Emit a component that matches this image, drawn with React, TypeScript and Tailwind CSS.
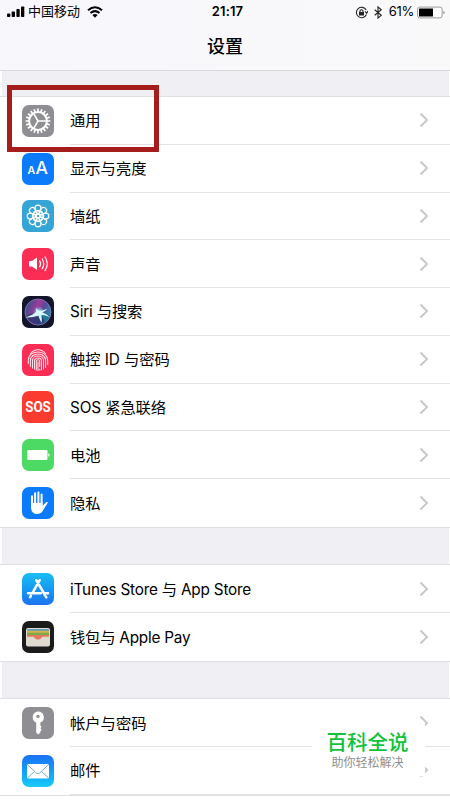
import type { ReactNode } from 'react';

type Item = {
    label: string;
    bg: string;
    icon: ReactNode;
    tracking?: string;
};

const angles = (count: number) => Array.from({ length: count }, (_, i) => (360 / count) * i);

const GearIcon = () => (
    <svg viewBox="0 0 32 32" className="size-8" fill="none" stroke="#fff">
        <circle cx="16" cy="16" r="8.9" strokeWidth="2" />
        {angles(20).map((a) => (
            <path key={a} d="M16 3.6v3.4" strokeWidth="1.7" transform={`rotate(${a} 16 16)`} />
        ))}
        {[90, 210, 330].map((a) => (
            <path key={a} d="M16 8v8" strokeWidth="1.6" transform={`rotate(${a} 16 16)`} />
        ))}
    </svg>
);

const DisplayIcon = () => (
    <svg viewBox="0 0 32 32" className="size-8" fill="#fff" fontFamily="Inter, sans-serif">
        <text x="5.5" y="21.2" fontSize="10.5" fontWeight="600">A</text>
        <text x="13.4" y="21.2" fontSize="17.5" fontWeight="500">A</text>
    </svg>
);

const WallpaperIcon = () => (
    <svg viewBox="0 0 32 32" className="size-8" fill="none" stroke="#fff" strokeWidth="1.25">
        <circle cx="16" cy="16" r="1.8" />
        {angles(8).map((a) => (
            <g key={a} transform={`rotate(${a} 16 16)`}>
                <circle cx="16" cy="8.2" r="3" />
                <ellipse cx="16" cy="12.3" rx="1.6" ry="2" />
            </g>
        ))}
    </svg>
);

const SoundIcon = () => (
    <svg viewBox="0 0 32 32" className="size-8" fill="none" stroke="#fff" strokeWidth="1.2" strokeLinecap="round">
        <path d="M7 13h3l5-3.5v12.4L10 18.500H7z" fill="#fff" stroke="none" />
        <path d="M17.6 12.8q2 3 0 6M20.2 11q3.2 4.8 0 9.7M23 9q4.6 6.8 0 13.6" />
    </svg>
);

const SiriIcon = () => (
    <svg viewBox="0 0 32 32" className="size-8">
        <defs>
            <linearGradient id="siri" x1="0" y1="0.3" x2="1" y2="0.7">
                <stop offset="0" stopColor="#2c4f8e" />
                <stop offset="0.4" stopColor="#a03c9c" />
                <stop offset="0.65" stopColor="#5a479b" />
                <stop offset="1" stopColor="#1f9db5" />
            </linearGradient>
            <radialGradient id="siriGlow">
                <stop offset="0" stopColor="#fff" />
                <stop offset="0.35" stopColor="#9be9f5" stopOpacity="0.7" />
                <stop offset="1" stopColor="#5bc5e8" stopOpacity="0" />
            </radialGradient>
        </defs>
        <circle cx="16" cy="16" r="13" fill="url(#siri)" />
        <path d="M4 20q6-3 12-4 6 0 12 4-3 9-12 9.5Q7 28 4 20z" fill="#24356f" opacity="0.8" />
        <path d="M18 17q5 0 10 3-2 4-5 6z" fill="#1c8f9f" opacity="0.7" />
        <circle cx="16" cy="16" r="13" fill="none" stroke="#8f7db5" strokeWidth="0.8" />
        <circle cx="17" cy="16" r="6" fill="url(#siriGlow)" />
        <path d="M3.500 21.500q6-1.500 10.500-5.500 1-1.500-.5-4 2.300 1.500 3.500 3 4-.2 8.500-2.200-2.800 3-5.300 3.600 4.500 1 7.800 4.800-4.500-2.300-8.700-2.500 1 4 .2 8.300-2.200-3.600-3-7.500-5.500 2.300-13 2z" fill="#d5fbfb" />
    </svg>
);

const TouchIdIcon = () => (
    <svg viewBox="0 0 32 32" className="size-8" fill="none" stroke="#ffe3ea" strokeWidth="1.05" strokeLinecap="round">
        <path d="M8.5 9.5Q11.5 5.7 16 5.7t7.5 3.8" />
        <path d="M6.3 19.500v-3C6.3 11 10.500 7.9 16 7.900s9.700 3.500 9.700 8.600v4" />
        <path d="M8.400 22.500v-6c0-4 3.500-6.500 7.600-6.500s7.600 2.500 7.600 6.500v7" />
        <path d="M10.500 24v-7.500c0-2.900 2.600-4.500 5.500-4.500s5.500 1.700 5.500 4.500v8.500" />
        <path d="M12.500 25.200v-8.500c0-1.700 1.700-2.700 3.500-2.700s3.500 1 3.500 2.700v9" />
        <path d="M14.300 26v-8.700q0-1.500 1.700-1.500t1.700 1.500v5.200M16 18v8.500M17.800 25v1.200" />
    </svg>
);

const SosIcon = () => (
    <svg viewBox="0 0 32 32" className="size-8">
        <text x="16" y="21.3" fontSize="15.5" fontWeight="700" textAnchor="middle" textLength="25.5" lengthAdjust="spacingAndGlyphs" fill="#fff" fontFamily="Roboto, sans-serif">SOS</text>
    </svg>
);

const BatteryIcon = () => (
    <svg viewBox="0 0 32 32" className="size-8" fill="#fff">
        <rect x="5.3" y="11" width="20.2" height="10" rx="1.3" />
        <path d="M26.3 14.200q1.300.3 1.300 1.800t-1.300 1.800z" />
    </svg>
);

const HandIcon = () => (
    <svg viewBox="0 0 32 32" className="size-8" fill="none" stroke="#fff" strokeLinecap="round">
        <path d="M10 9.200v9M13.100 6.300V17M16.400 5.600V17M19.600 7.500v11" strokeWidth="2" />
        <path d="M9 15.500q6.200 1.200 11.600 0v3.600l3.400-3.800q1.400-.9 2 .2l-4.200 6.600q-1.800 4.900-6.300 4.900Q9 27 9 20z" fill="#fff" stroke="none" />
    </svg>
);

const AppStoreIcon = () => (
    <svg viewBox="0 0 32 32" className="size-8" fill="none" stroke="#fff" strokeWidth="2.5" strokeLinecap="round">
        <path d="M17.700 7.200L10.500 19.800M14.300 7.200L22.900 22M6 20.200h12.800M23 20.200h3M8.900 22.800L8 24.300M23.500 23l.8 1.400" />
    </svg>
);

const WalletIcon = () => (
    <svg viewBox="0 0 32 32" className="size-8">
        <rect x="4" y="7" width="24" height="18.5" rx="2" fill="#dedacf" />
        <path d="M5 10V9.300Q5 8 6.300 8h19.400Q27 8 27 9.300v.7z" fill="#5b9fc0" />
        <path d="M5 9.700h22v2.300H5z" fill="#d9b044" />
        <path d="M5 11.700h22v2.600H5z" fill="#7aab4a" />
        <path d="M5 14h22v5H5z" fill="#e4785b" />
        <path d="M5 15.700h6q1 0 1.700 1.200 1.100 1.600 3.300 1.600t3.300-1.600q.7-1.200 1.700-1.200h6v7q0 1.500-1.500 1.500h-19Q5 24.200 5 22.700z" fill="#dedacf" />
    </svg>
);

const KeyIcon = () => (
    <svg viewBox="0 0 32 32" className="size-8">
        <path fillRule="evenodd" fill="#fff" d="M16 4.500a5.800 5.800 0 0 1 2.400 11.100v3l1.200 1.200-1.200 1.500 1.300 1.400-1.300 1.500v1.300L16.200 27.500l-2-2V15.600A5.800 5.800 0 0 1 16 4.500zm0 3.200a1.700 1.700 0 1 0 0 3.400 1.700 1.700 0 0 0 0-3.400z" />
    </svg>
);

const MailIcon = () => (
    <svg viewBox="0 0 32 32" className="size-8">
        <rect x="5" y="9" width="22" height="14.5" rx="1.5" fill="#fff" />
        <path d="M5.500 9.700l9 8.500q1.500 1.200 3 0l9-8.500M5.600 22.800l7-6.400M26.400 22.800l-7-6.400" fill="none" stroke="#6d9fc2" strokeWidth="0.9" />
    </svg>
);

const groups: Item[][] = [
    [
        { label: '通用', bg: 'bg-[#8e8e93]', icon: <GearIcon /> },
        { label: '显示与亮度', bg: 'bg-[#0b7bfb]', icon: <DisplayIcon /> },
        { label: '墙纸', bg: 'bg-[#35a5d6]', icon: <WallpaperIcon /> },
        { label: '声音', bg: 'bg-[#fb2d55]', icon: <SoundIcon /> },
        { label: 'Siri 与搜索', bg: 'bg-[#11142b]', icon: <SiriIcon />, tracking: 'tracking-[-0.15px]' },
        { label: '触控 ID 与密码', bg: 'bg-[#fb2d55]', icon: <TouchIdIcon />, tracking: 'tracking-[-0.05px]' },
        { label: 'SOS 紧急联络', bg: 'bg-[#fb3b30]', icon: <SosIcon />, tracking: 'tracking-[-0.1px]' },
        { label: '电池', bg: 'bg-[#4cd964]', icon: <BatteryIcon /> },
        { label: '隐私', bg: 'bg-[#0b7bfb]', icon: <HandIcon /> },
    ],
    [
        { label: 'iTunes Store 与 App Store', bg: 'bg-linear-to-b from-[#1cbdf5] to-[#1d72ee]', icon: <AppStoreIcon />, tracking: 'tracking-[-0.2px]' },
        { label: '钱包与 Apple Pay', bg: 'bg-[#1b1b1c]', icon: <WalletIcon />, tracking: 'tracking-[-0.22px]' },
    ],
    [
        { label: '帐户与密码', bg: 'bg-[#8e8e93]', icon: <KeyIcon /> },
        { label: '邮件', bg: 'bg-linear-to-b from-[#1d70f2] to-[#1ccaf8]', icon: <MailIcon /> },
    ],
];

const StatusBar = () => (
    <div className="grid h-6 grid-cols-3 items-center pl-[7px] pr-[5px] text-[13px]">
        <div className="flex items-center">
            <svg viewBox="0 0 18 12" className="h-3 w-[18px]">
                <rect x="0" y="7.5" width="3.3" height="3.5" rx="0.8" />
                <rect x="4.7" y="5.5" width="3.3" height="5.5" rx="0.8" />
                <rect x="9.4" y="3" width="3.3" height="8" rx="0.8" />
                <rect x="14" y="0.5" width="3.3" height="10.5" rx="0.8" />
            </svg>
            <span className="ml-[3px]">中国移动</span>
            <svg viewBox="0 0 16 12" className="ml-[7px] h-3 w-4" fill="none" stroke="#000" strokeWidth="2">
                <path d="M1 4.200q7-6 14 0M3.500 7q4.500-3.700 9 0" />
                <path d="M5.400 9q2.600-2.100 5.200 0L8 11.700z" fill="#000" stroke="none" />
            </svg>
        </div>
        <div className="pl-[3px] text-center font-semibold tracking-[0.15px]">21:17</div>
        <div className="flex items-center justify-end">
            <svg viewBox="0 0 13 13" className="size-[13px]" fill="none" stroke="#222" strokeWidth="1.1">
                <path d="M11.200 4A5.200 5.200 0 1 0 11.400 8.500M10 5.300l1.700 2 1.200-2.300" />
                <rect x="4" y="6" width="5" height="3.5" fill="#222" stroke="none" />
                <path d="M5 6V5q0-1.300 1.500-1.300T8 5v1" />
            </svg>
            <svg viewBox="0 0 10 14" className="ml-[5px] h-[13px] w-2.5" fill="none" stroke="#222" strokeWidth="1.2">
                <path d="M1.500 4l7 6L5 13V1l3.500 3-7 6" />
            </svg>
            <span className="ml-[6px] tracking-[-0.3px]">61%</span>
            <svg viewBox="0 0 28 13" className="ml-[3px] h-[13px] w-7">
                <rect x="0.6" y="1.1" width="24.5" height="10.8" rx="2" fill="#fff" stroke="#999" />
                <rect x="2" y="2.6" width="14" height="7.8" rx="0.5" />
                <path d="M26.300 4.700q1.400.4 1.400 1.800t-1.400 1.800z" fill="#999" />
            </svg>
        </div>
    </div>
);

const Row = ({ item, last }: { item: Item; last: boolean }) => (
    <div className="flex h-[47.75px] items-center pl-[22px]">
        <div className={`size-8 shrink-0 overflow-hidden rounded-[7px] ${item.bg}`}>{item.icon}</div>
        <div className={`ml-4 flex h-full flex-1 items-center justify-between pr-[21px] ${last ? '' : 'border-b border-[#e3e3e5]'}`}>
            <span className={`whitespace-nowrap pt-[3px] text-[15.3px] ${item.tracking ?? ''}`}>{item.label}</span>
            <svg viewBox="0 0 10 16" className="h-4 w-2.5" fill="none" stroke="#c7c7cc" strokeWidth="1.9">
                <path d="M1.500 1.500L8 8l-6.500 6.500" />
            </svg>
        </div>
    </div>
);

const Group = ({ items, open }: { items: Item[]; open?: boolean }) => (
    <div className="-ml-0.5 -mr-px border-y border-[#e0e0e4] bg-white">
        {items.map((item, i) => (
            <Row key={item.label} item={item} last={!open && i === items.length - 1} />
        ))}
    </div>
);

const App = () => (
    <div className="relative h-[800px] w-[450px] overflow-hidden bg-white font-['Inter','Noto_Sans_CJK_SC',sans-serif] text-black">
        <header className="h-[71px] border-b border-[#d9d9dd] bg-linear-to-r from-[#f7f7fc] to-[#f9f9fa]">
            <StatusBar />
            <h1 className="pt-[9px] text-center text-[18px] leading-[27px] font-medium">设置</h1>
        </header>
        <main className="ml-0.5 mr-px flex flex-col bg-[#efeff4] pt-[25px]">
            <Group items={groups[0]} />
            <div className="h-[36.6px] shrink-0" />
            <Group items={groups[1]} />
            <div className="h-[36.4px] shrink-0" />
            <Group items={groups[2]} open />
        </main>

        {/* highlight around the first row */}
        <div className="absolute top-[85px] left-[7px] h-[67px] w-[152px] border-5 border-[#a51e1b]" />

        {/* site badge */}
        <div className="absolute top-[724px] left-[312px] flex h-[52px] w-[113px] flex-col items-center bg-white">
            <span className="mt-[6px] -ml-0.5 text-[20.5px] leading-[26px] font-medium text-[#12c23a]">百科全说</span>
            <span className="-ml-0.5 text-[12px] leading-[14px] text-[#8e8e8e]">助你轻松解决</span>
        </div>
    </div>
);

export default App;
